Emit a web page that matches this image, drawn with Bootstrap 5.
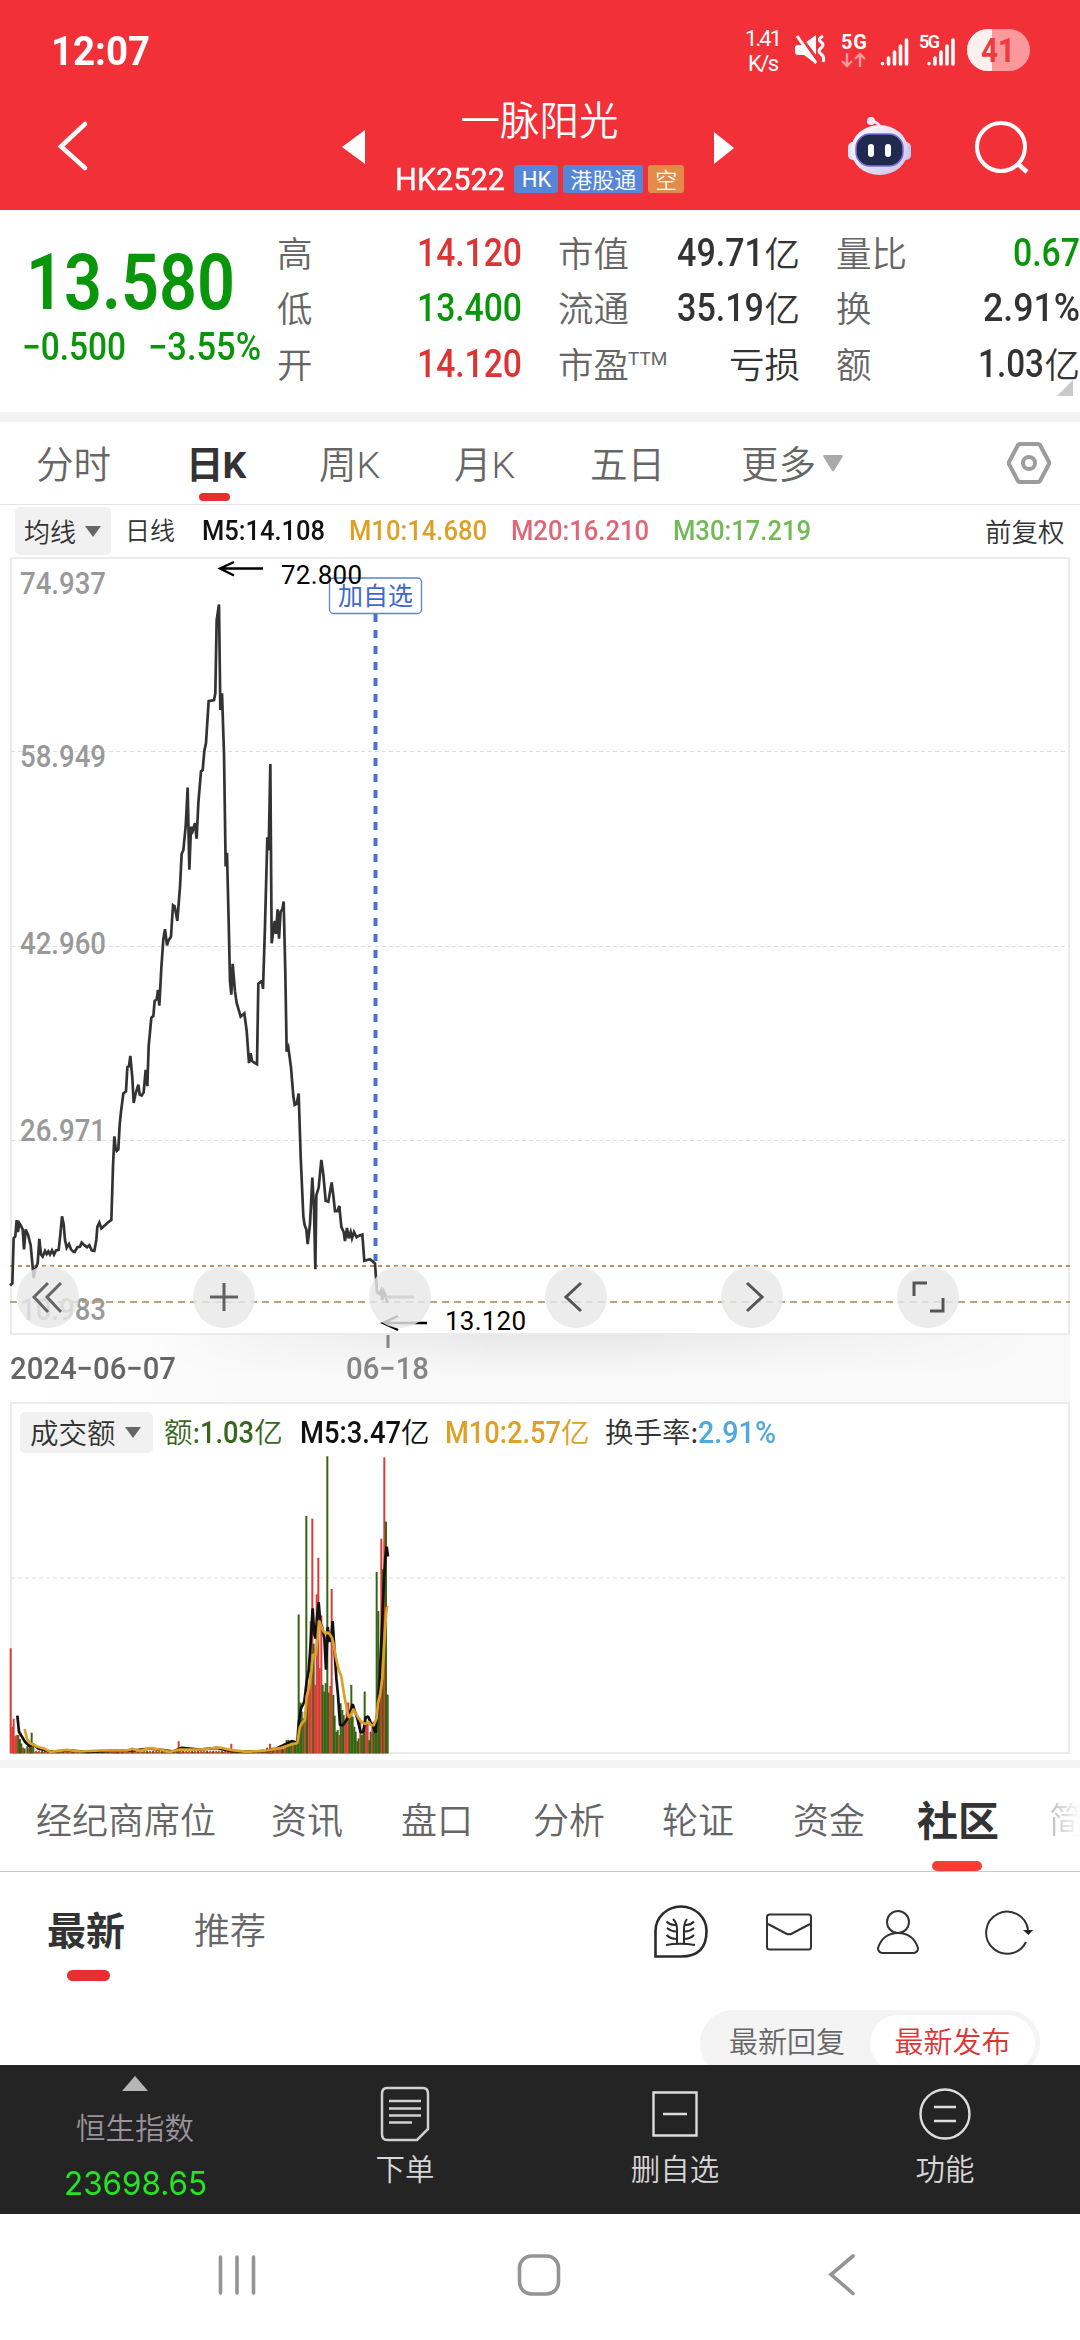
<!DOCTYPE html>
<html lang="zh-CN">
<head>
<meta charset="utf-8">
<meta name="viewport" content="width=device-width, initial-scale=1">
<title>一脉阳光 HK2522</title>
<link href="https://cdn.jsdelivr.net/npm/bootstrap@5.3.0/dist/css/bootstrap.min.css" rel="stylesheet">
<style>
body{width:1080px;height:2340px;overflow:hidden;background:#fff;color:#333;font-family:Roboto,"Noto Sans CJK SC",sans-serif;line-height:1}
svg{display:block;overflow:visible}
svg text{font-family:Roboto,"Noto Sans CJK SC",sans-serif}
.fit{display:inline-block;white-space:nowrap;font-weight:500}
.fit>span{display:inline-block;transform-origin:0 50%}
.cjk{font-family:"Noto Sans CJK SC",sans-serif;font-weight:350;white-space:nowrap}
.up{color:#de3333}.down{color:#0a960a}
.app-head{height:210px;background:#f23038;color:#fff}
.status-row{height:102px;padding-left:51px;font-size:41px}
.status-row .fit{font-weight:700}
.title-row{height:108px;display:grid;grid-template-columns:342px 23px 349px 20px 114px 63px 66px 1fr;align-items:start}
.stock-name{font-size:39.5px;line-height:40px;margin-top:-4px}
.stock-code{font-size:32px;height:28px;margin-top:27px;gap:5px}
.stock-code .fit{font-weight:400;-webkit-text-stroke:.4px #fff}
.tag{height:28px;border-radius:3px;background:#5586d8;font-size:22px;line-height:26px;padding:0 6.5px 0 7.5px}
.tag-hk{line-height:29px}
.tag-short{background:#e28c4a}
.quote{height:202px;display:grid;grid-template-columns:277px 281px 278px 244px}
.price{font-size:77px;line-height:77px;margin:35px 0 0 26px}
.price .fit{font-weight:600}
.chg{font-size:38px;margin-top:6px;padding-left:22px;gap:22px}
.qcol{padding-top:15.5px;font-size:39px}
.qcol>div{height:55.5px;display:flex;align-items:center;justify-content:space-between}
.qcol .cjk{font-size:35.5px;color:#666;position:relative;top:-2px}
.qcol .val{color:#333;display:flex;align-items:center}
.qcol .val .cjk{color:#333}
.ttm{font-size:19px;color:#666;align-self:flex-start;margin:12px auto 0 -1px}
.band{background:#f3f3f3}
.ktabs{height:83px;border-bottom:1px solid #e3e3e3;padding:0 0 0 36px;display:grid;grid-template-columns:150px 133px 135px 136px 151px 82px 184px 1fr;align-items:center;font-size:37.5px;color:#666}
.ktabs .cjk{font-family:Roboto,"Noto Sans CJK SC",sans-serif;margin-top:6px}
.ktabs .on{letter-spacing:-1px}
.on{color:#333!important;font-weight:700!important}
.with-bar{position:relative}
.with-bar::after{content:"";position:absolute;border-radius:6px;background:#e63030}
.k-on::after{left:13px;top:46px;width:31px;height:8px}
.ma-row{height:52px;display:grid;grid-template-columns:112px 75px 147px 162px 162px 312px 1fr;align-items:center;padding-left:15px;font-size:28px}
.pick{background:#f1f1f1;border-radius:5px;display:flex;align-items:center;justify-content:space-between}
.ma-row .pick{width:96px;height:48px;padding:0 10px 0 9px;font-size:26px}
.kchart{height:778px;position:relative}
.tools{position:absolute;left:17px;top:709px;width:942px;height:62px;display:flex;justify-content:space-between}
.tool-btn{width:62px;height:62px;border-radius:50%;background:rgba(232,232,232,.82)}
.axis-row{height:67px;position:relative;background:linear-gradient(90deg,#fff 30px,#f9f9f9 260px);margin-right:10px;font-size:31px;color:#666;padding-left:10px}
.axis-row::before{content:"";position:absolute;inset:0;background:linear-gradient(rgba(0,0,0,.065),transparent 62%);-webkit-mask-image:linear-gradient(90deg,transparent 150px,#000 500px,#000 600px,transparent 1040px);mask-image:linear-gradient(90deg,transparent 150px,#000 500px,#000 600px,transparent 1040px)}
.vol{height:358px;position:relative}
.vol-head{position:absolute;left:20px;top:10px;height:41px;width:1040px;display:grid;grid-template-columns:144px 136px 145px 160px 1fr;align-items:center;font-size:31px}
.vol-head .pick{width:133px;height:41px;padding:0 12px 0 10px}
.vol-head .cjk{font-size:28.5px;position:relative;top:-1px}
.vol-head .pick.cjk{top:0}
.vol-head>div{white-space:nowrap;display:flex;align-items:center}
.ntabs{height:104px;border-bottom:1px solid #c8c8c8;padding:0 0 3px 36px;display:grid;grid-template-columns:235px 130px 132px 129px 131px 124px 132px 1fr;align-items:center;font-size:36px;color:#666}
.ntabs .on{font-size:41px}
.n-on::after{left:15px;bottom:-23px;width:50px;height:10px;background:#fb3c31}
.fade-tab{background:linear-gradient(90deg,#bbb,#fff 32px);-webkit-background-clip:text;background-clip:text;color:transparent;width:31px;overflow:hidden}
.feed-head{height:120px;padding-left:47px;display:grid;grid-template-columns:147px 460px 112px 111px 108px 1fr;align-items:center;color:#666;font-size:36px}
.feed-head>span{margin-top:-8px}
.feed-head .on{font-size:39px}
.f-on::after{left:20px;top:61px;width:43px;height:11px}
.feed-body{height:73px;overflow:hidden;padding:18px 40px 0 700px}
.switcher{height:66px;border-radius:33px;background:#f4f4f4;font-size:29px;padding:5px 5px 5px 29px;color:#666}
.switcher>span:first-child{margin-bottom:5px}
.switcher .picked{background:#fff;border-radius:28px;height:56px;width:165px;color:#dd3434;padding-bottom:5px}
.dock{height:149px;background:#242424;color:#d6d6d6;font-size:29.5px;display:grid;grid-template-columns:repeat(4,1fr)}
.dock>div{display:flex;flex-direction:column;align-items:center}
.idx{color:#99939a}
.idx-val{color:#25e425;font-size:33px}
.idx-val .fit{font-family:Inter,sans-serif;font-weight:400}
</style>
<script src="https://cdn.jsdelivr.net/npm/bootstrap@5.3.0/dist/js/bootstrap.bundle.min.js"></script>
</head>
<body>
<header class="app-head">
  <div class="status-row d-flex align-items-center">
    <span class="fit" data-w="99">12:07</span>
    <svg class="ms-auto me-5" width="290" height="44" viewBox="742 30 290 44" fill="#fff">
      <g font-size="22"><text x="745" y="47" textLength="37">1.41</text><text x="748" y="72" textLength="31">K/s</text></g>
      <path d="M795 49q0-3 3-3h4l14-10v29l-12-9h-6q-3 0-3-3z"/><path d="M799 36l20 27" stroke="#f23038" stroke-width="3.600"/><path d="M797 37l19 27" stroke="#fff" stroke-width="3"/>
      <path d="M823 37q-6 3-2 6t0 6t0 6t2 8" fill="none" stroke="#fff" stroke-width="3"/>
      <text x="841" y="50" font-size="20" font-weight="700" textLength="26">5G</text>
      <g fill="none" stroke="#fa9a9d" stroke-width="2.400"><path d="M847 54v13M842 62l5 5 5-5M860 68V55M855 60l5-5 5 5"/></g>
      <g stroke="#fff" stroke-width="3.600" stroke-linecap="round"><path d="M882.500 64.500v.1M888.500 65V59M894.500 65V53M900.500 65V47M906.500 65V41M929 64.500v.1M935 65V59M941 65V53M947 65V47M953 65V41"/></g>
      <text x="919" y="49" font-size="18" font-weight="600" textLength="21">5G</text>
      <rect x="967" y="30" width="63" height="42" rx="21" fill="#fa999c"/><path d="M992 30h-4a21 21 0 0 0 0 42h4z" fill="#fff0f0"/>
      <text x="981" y="63" font-size="33" font-weight="700" fill="#ef3b40" textLength="34" lengthAdjust="spacingAndGlyphs">41</text>
    </svg>
  </div>
  <div class="title-row">
    <svg width="100" height="108" viewBox="0 102 100 108"><path d="M85 124L61 146.500 85 168" fill="none" stroke="#fff" stroke-width="4.500" stroke-linecap="round"/></svg>
    <svg width="23" height="108" viewBox="342 102 23 108"><path d="M365 130v34l-23-17z" fill="#fff"/></svg>
    <div class="text-center">
      <div class="stock-name cjk">一脉阳光</div>
      <div class="stock-code d-flex align-items-center justify-content-center">
        <span class="fit me-1" data-w="110">HK2522</span><span class="tag tag-hk">HK</span><span class="tag cjk">港股通</span><span class="tag tag-short cjk">空</span>
      </div>
    </div>
    <svg width="20" height="108" viewBox="714 102 20 108"><path d="M714 132v32l20-16z" fill="#fff"/></svg>
    <span></span>
    <svg width="63" height="108" viewBox="848 102 63 108">
      <defs><linearGradient id="shell" x2="1" y2="1"><stop stop-color="#fff"/><stop offset="1" stop-color="#c9c3ee"/></linearGradient></defs>
      <path d="M880 128q-1-6-9-7" fill="none" stroke="#e9e4fb" stroke-width="3"/><circle cx="871" cy="121" r="4" fill="#f6ecff"/>
      <rect x="848" y="142" width="12" height="18" rx="5" fill="#e3e2f8"/><rect x="899" y="142" width="12" height="18" rx="5" fill="#cfc6ef"/>
      <ellipse cx="879.500" cy="150" rx="28.500" ry="25" fill="url(#shell)"/>
      <rect x="856" y="134" width="47" height="32" rx="14" fill="#1f2a4e" stroke="#7b6cd8" stroke-width="1.500"/>
      <rect x="868" y="144" width="6" height="13" rx="3" fill="#fff"/><rect x="885" y="144" width="6" height="13" rx="3" fill="#fff"/>
    </svg>
    <span></span>
    <svg width="60" height="108" viewBox="977 102 60 108"><circle cx="1001" cy="147" r="24" fill="none" stroke="#fff" stroke-width="4"/><path d="M1017 163l10 9" stroke="#fff" stroke-width="4.500"/></svg>
  </div>
</header>

<section class="quote">
  <div>
    <div class="price down"><span class="fit" data-w="209">13.580</span></div>
    <div class="chg down d-flex"><span class="fit" data-w="104">−0.500</span><span class="fit" data-w="113">−3.55%</span></div>
  </div>
  <div class="qcol" style="padding-right:36px">
    <div><span class="cjk">高</span><span class="fit up" data-w="105">14.120</span></div>
    <div><span class="cjk">低</span><span class="fit down" data-w="105">13.400</span></div>
    <div><span class="cjk">开</span><span class="fit up" data-w="105">14.120</span></div>
  </div>
  <div class="qcol" style="padding-right:36px">
    <div><span class="cjk">市值</span><span class="val"><span class="fit" data-w="87">49.71</span><span class="cjk">亿</span></span></div>
    <div><span class="cjk">流通</span><span class="val"><span class="fit" data-w="87">35.19</span><span class="cjk">亿</span></span></div>
    <div><span class="cjk">市盈</span><span class="ttm">TTM</span><span class="val"><span class="cjk">亏损</span></span></div>
  </div>
  <div class="qcol position-relative">
    <div><span class="cjk">量比</span><span class="fit down" data-w="67">0.67</span></div>
    <div><span class="cjk">换</span><span class="val"><span class="fit" data-w="97">2.91%</span></span></div>
    <div><span class="cjk">额</span><span class="val"><span class="fit" data-w="66">1.03</span><span class="cjk">亿</span></span></div>
    <svg class="position-absolute bottom-0 end-0" width="23" height="32"><path d="M0 16H16V0z" fill="#c9c9c9"/></svg>
  </div>
</section>
<div class="band" style="height:10px"></div>

<nav class="ktabs">
  <span class="cjk">分时</span><span class="cjk on with-bar k-on">日K</span><span class="cjk">周K</span><span class="cjk">月K</span><span class="cjk">五日</span><span class="cjk">更多</span>
  <svg width="20" height="17"><path d="M2 0h16q2.500 0 1.500 2l-8 13q-1.500 2.500-3 0L.5 2Q-.5 0 2 0z" fill="#aaa"/></svg>
  <svg width="44" height="42" viewBox="0 0 44 42" fill="none" stroke="#9c9c9c" stroke-width="4"><path d="M13 2h18q1 0 2 1l9 17q.5 1 0 2l-9 17q-1 1-2 1H13q-1 0-2-1L2 22q-.5-1 0-2l9-17q1-1 2-1z"/><circle cx="22" cy="21" r="6"/></svg>
</nav>
<div class="ma-row">
  <div class="pick cjk">均线<svg width="16" height="11"><path d="M0 0h16L8 11z" fill="#666"/></svg></div>
  <span class="cjk" style="font-size:25px;margin:-3px 0 0 -2px">日线</span>
  <span class="fit" data-w="123" style="color:#111">M5:14.108</span><span class="fit" data-w="138" style="color:#dda127">M10:14.680</span><span class="fit" data-w="138" style="color:#df6677">M20:16.210</span><span class="fit" data-w="138" style="color:#72ba55">M30:17.219</span>
  <span class="cjk" style="font-size:26.500px">前复权</span>
</div>

<section class="kchart">
  <svg width="1080" height="778" viewBox="0 557 1080 778">
    <path d="M11 1335V558H1069V1335M11 1334H1069" fill="none" stroke="#ebebeb" stroke-width="2"/>
    <path d="M11 751.500H1069M11 946.500H1069M11 1140.500H1069" stroke="#dedede" stroke-dasharray="4 3"/>
    <g font-size="31" font-weight="500" fill="#999">
      <text x="20" y="594" textLength="86" lengthAdjust="spacingAndGlyphs">74.937</text><text x="20" y="767" textLength="86" lengthAdjust="spacingAndGlyphs">58.949</text><text x="20" y="954" textLength="86" lengthAdjust="spacingAndGlyphs">42.960</text><text x="20" y="1141" textLength="86" lengthAdjust="spacingAndGlyphs">26.971</text><text x="20" y="1320" textLength="86" lengthAdjust="spacingAndGlyphs">10.983</text>
    </g>
    <path d="M10 1266H1070" stroke="#bb8e57" stroke-width="2" stroke-dasharray="4 4"/>
    <path d="M10 1302H1070" stroke="#baa47c" stroke-width="2" stroke-dasharray="7 5"/>
    <path d="M375.500 614V1261" stroke="#4a70d4" stroke-width="4" stroke-dasharray="8 8"/>
    <g transform="translate(0 560) scale(.33333 .523)">
      <polyline fill="none" stroke="#333" stroke-width="2.700" vector-effect="non-scaling-stroke" points="30,1387 37,1383 41,1297 46,1293 50,1262 54,1285 58,1268 62,1272 68,1280 72,1318 77,1280 84,1290 92,1310 97,1345 101,1373 106,1355 113,1345 118,1298 123,1328 128,1332 135,1321 140,1327 145,1322 150,1328 156,1320 162,1328 168,1320 176,1319 181,1290 186,1255 191,1270 195,1300 200,1315 207,1308 213,1318 219,1322 224,1323 232,1314 240,1313 245,1305 253,1310 261,1314 268,1310 275,1320 283,1321 289,1300 292,1275 298,1267 304,1278 315,1272 325,1266 334,1262 339,1160 343,1102 347,1125 350,1130 355,1127 359,1080 363,1055 370,1020 378,1016 382,970 387,968 391,948 397,990 401,1038 407,1020 415,1003 419,1022 425,1024 431,1018 437,975 442,1006 446,930 454,875 460,872 464,843 470,840 474,822 478,852 484,780 490,725 495,706 501,737 505,728 513,720 519,660 524,662 532,690 540,625 545,562 550,555 557,510 563,435 568,592 573,510 578,518 585,503 590,533 595,465 603,404 608,402 613,365 618,350 626,270 642,268 646,255 650,115 657,85 661,287 666,255 672,370 677,586 681,560 686,690 690,805 694,831 698,772 705,825 710,847 717,862 722,873 733,867 740,900 747,962 752,943 756,958 765,962 771,964 775,810 786,805 789,820 795,700 802,530 806,555 811,390 815,733 824,690 828,715 833,668 837,724 842,672 847,668 851,653 856,790 860,940 865,932 873,970 880,1025 884,1042 890,1040 896,1020 902,1140 910,1255 914,1272 919,1280 923,1308 930,1270 937,1181 942,1240 946,1356 949,1215 956,1200 964,1147 970,1175 977,1225 985,1227 995,1190 1000,1215 1005,1245 1012,1245 1018,1235 1024,1275 1031,1285 1035,1302 1041,1277 1046,1297 1052,1285 1056,1297 1062,1285 1070,1295 1077,1292 1087,1290 1093,1340 1110,1337 1125,1345 1131,1400 1138,1403 1143,1397 1147,1415 1151,1398 1155,1403 1162,1420"/>
    </g>
    <rect x="329.500" y="578" width="92" height="35.500" rx="4" fill="#fff" stroke="#5a82d8" stroke-width="1.300"/>
    <text x="338" y="605" font-size="25" fill="#4168cf" textLength="75">加自选</text>
    <g font-size="26" fill="#000"><text x="281" y="584" textLength="81">72.800</text><text x="445" y="1330" textLength="81">13.120</text></g>
    <path d="M234 562L220 568.500l14 7M220 568.500h43M398 1316l-15 7 15 7M383 1323h44" fill="none" stroke="#000" stroke-width="2.400"/>
  </svg>
  <div class="tools">
    <svg class="tool-btn" viewBox="0 0 62 62" fill="none" stroke="#666" stroke-width="3"><path d="M31 17L17 31l14 15M44 17L30 31l14 15"/></svg>
    <svg class="tool-btn" viewBox="0 0 62 62" stroke="#606060" stroke-width="3"><path d="M17 31H45M31 17V45"/></svg>
    <svg class="tool-btn" viewBox="0 0 62 62" stroke="#d3d3d3" stroke-width="3"><path d="M17 31H45"/></svg>
    <svg class="tool-btn" viewBox="0 0 62 62" fill="none" stroke="#555" stroke-width="3"><path d="M36 17L21 31l15 14"/></svg>
    <svg class="tool-btn" viewBox="0 0 62 62" fill="none" stroke="#555" stroke-width="3"><path d="M26 17L41 31 26 45"/></svg>
    <svg class="tool-btn" viewBox="0 0 62 62" fill="none" stroke="#555" stroke-width="3"><path d="M17 30V17H30M33 45H46V32"/></svg>
  </div>
</section>
<div class="axis-row d-flex align-items-center">
  <span class="fit" data-w="166">2024−06−07</span><span class="fit" data-w="83" style="color:#858585;margin-left:170px">06−18</span>
  <svg class="position-absolute top-0 start-0" width="400" height="14"><path d="M388 0V13" stroke="#858585" stroke-width="3"/></svg>
</div>

<section class="vol">
  <svg width="1080" height="352" viewBox="0 0 1080 352">
    <path d="M11 351V1H1069V351H11" fill="none" stroke="#ebebeb" stroke-width="2"/>
    <path d="M11 176H1069" stroke="#e8e8e8" stroke-width="1.500" stroke-dasharray="4 3"/>
    <g transform="translate(0 -2) scale(.33333 .3351)">
      <g id="bars"></g>
      <g fill="none" stroke-width="2.700" stroke-linejoin="bevel">
        <polyline stroke="#111" vector-effect="non-scaling-stroke" points="52,942 57,990 66,1005 75,1020 88,1033 100,1028 115,1040 150,1049 210,1046 260,1050 330,1047 400,1046 450,1040 490,1045 520,1049 545,1038 600,1043 650,1038 690,1047 740,1050 800,1047 830,1040 875,1018 892,1022 896,965 903,920 913,900 920,840 926,808 931,740 938,622 943,700 947,712 951,650 956,603 961,665 967,680 973,710 978,805 983,678 989,722 994,705 998,660 1003,740 1009,830 1014,880 1020,970 1029,970 1040,955 1049,935 1058,908 1065,930 1072,950 1082,992 1090,990 1097,948 1104,944 1112,962 1120,975 1127,993 1133,920 1139,830 1145,700 1151,560 1156,470 1160,438 1164,467"/>
        <polyline stroke="#dda127" vector-effect="non-scaling-stroke" points="74,982 81,1012 92,1025 110,1034 135,1041 150,1050 200,1044 240,1049 300,1046 380,1046 397,1041 420,1047 450,1039 480,1043 510,1050 540,1043 600,1043 660,1037 690,1044 740,1050 800,1046 840,1039 880,1026 892,1024 899,978 907,963 915,955 920,885 928,855 934,810 939,760 947,762 953,710 957,658 964,675 970,690 977,697 983,694 990,700 996,710 1001,730 1008,770 1016,805 1024,825 1030,865 1036,900 1041,925 1047,948 1053,940 1060,922 1067,935 1076,950 1086,962 1096,967 1105,960 1113,970 1121,971 1130,950 1134,905 1141,875 1147,830 1152,740 1158,640 1161,618 1165,620"/>
      </g>
    </g>
  </svg>
  <div class="vol-head">
    <div class="pick cjk">成交额<svg width="16" height="11"><path d="M0 0h16L8 11z" fill="#666"/></svg></div>
    <div style="color:#38661c"><span class="cjk">额:</span><span class="fit" data-w="54">1.03</span><span class="cjk">亿</span></div>
    <div style="color:#111"><span class="fit" data-w="101">M5:3.47</span><span class="cjk">亿</span></div>
    <div style="color:#dda127"><span class="fit" data-w="116">M10:2.57</span><span class="cjk">亿</span></div>
    <div><span class="cjk">换手率:</span><span class="fit" data-w="78" style="color:#50a8dd">2.91%</span></div>
  </div>
</section>
<div class="band" style="height:8px"></div>

<nav class="ntabs cjk">
  <span>经纪商席位</span><span>资讯</span><span>盘口</span><span>分析</span><span>轮证</span><span>资金</span><span><span class="on with-bar n-on">社区</span></span><span class="fade-tab">简</span>
</nav>
<div class="feed-head cjk">
  <span class="on with-bar f-on">最新</span><span>推荐</span>
  <svg width="54" height="54" viewBox="0 0 54 54" fill="none" stroke="#2b2b2b" stroke-width="2.600"><path d="M1.500 51.500V26a25.500 24.500 0 0 1 51 0q0 25.500-25.500 25.500z"/><path stroke-width="2" d="M12 40q14-2.500 29 0M23 38V24q0-6-4-10M12.500 16.500q4 4 9 3.500M13 23q5 4 10 3.500M12.500 30q4 4 10.500 4M30 38V24q0-6 3-10M40 16.500q-4 4-9 3.500M40 23q-5 4-10 3.500M40 30q-4 4-10 4"/></svg>
  <svg width="46" height="38" viewBox="0 0 46 38" fill="none" stroke="#333" stroke-width="2"><rect x="1" y="1.500" width="44" height="35" rx="2.500"/><path d="M2 11l18 9.500q3 1.500 6 0l18-9.500"/></svg>
  <svg width="42" height="44" viewBox="0 0 42 44" fill="none" stroke="#333" stroke-width="2"><circle cx="21" cy="12" r="11"/><path d="M5 43q-4-1-4-5 5-15 20-15t20 15q0 4-4 5z"/></svg>
  <svg width="48" height="44" viewBox="0 0 48 44" fill="none" stroke="#333" stroke-width="2"><path d="M41 32A21 21 0 1 1 43 20"/><path d="M38 20h10l-4.500 5z" fill="#222" stroke="none"/></svg>
</div>
<div class="feed-body">
  <div class="switcher cjk d-flex align-items-center justify-content-between"><span>最新回复</span><span class="picked d-flex align-items-center justify-content-center">最新发布</span></div>
</div>

<footer class="dock cjk">
  <div><svg width="26" height="15" style="margin-top:11px"><path d="M13 0l13 15H0z" fill="#b5b5b5"/></svg><span class="idx" style="margin-top:21px">恒生指数</span><span class="idx-val" style="margin-top:23px"><span class="fit" data-w="143">23698.65</span></span></div>
  <div><svg width="50" height="56" viewBox="0 0 50 56" style="margin-top:21px" fill="none" stroke="#d0d0d0" stroke-width="2.500"><path d="M7 2H43q5 0 5 6V43L37 54H7q-5 0-5-6V8q0-6 5-6z"/><path d="M9 15H41M9 22.500H41M9 29.500H41M9 36.500H32"/></svg><span style="margin-top:11px">下单</span></div>
  <div><svg width="46" height="46" viewBox="0 0 46 46" style="margin-top:26px" fill="none" stroke="#ddd" stroke-width="2.400"><path d="M1.500 1.500H44.500V44.500H1.500zM11 23H35"/></svg><span style="margin-top:16px">删自选</span></div>
  <div><svg width="52" height="52" viewBox="0 0 52 52" style="margin-top:23px" fill="none" stroke="#ddd" stroke-width="2.400"><circle cx="26" cy="26" r="24.500"/><path d="M15 19H37M15 33H37"/></svg><span style="margin-top:13px">功能</span></div>
</footer>
<svg width="1080" height="126" viewBox="0 2214 1080 126" fill="none" stroke="#949494" stroke-width="3.600" stroke-linecap="round"><path d="M220.500 2257V2293M237 2257V2293M253.500 2257V2293M853 2256L831 2274.500 853 2293.500"/><rect x="519.500" y="2256" width="39" height="38" rx="12"/></svg>

<script>
// squeeze figures to the narrow numeric width given in data-w
document.querySelectorAll('.fit').forEach(function (el) {
  var inner = document.createElement('span');
  inner.textContent = el.textContent;
  el.textContent = '';
  el.appendChild(inner);
  var w = +el.dataset.w, natural = inner.getBoundingClientRect().width;
  inner.style.transform = 'scaleX(' + (w / natural) + ')';
  el.style.width = w + 'px';
  inner.style.marginRight = (w - natural) + 'px';
});
// turnover bars: x, top, colour (r = up, g = down)
var bars = [[32,741,'r'],[37,975,'r'],[41,951,'r'],[46,1003,'r'],[50,1000,'r'],[55,1000,'g'],[60,1012,'g'],[64,1025,'g'],[69,1037,'r'],[74,1040,'g'],[82,1033,'g'],[87,1037,'r'],[91,1027,'g'],[95,993,'g'],[100,1030,'g'],
 [345,1042,'r'],[352,1047,'r'],[365,1043,'r'],[536,1018,'r'],[541,1036,'r'],[694,1026,'r'],[810,1026,'r'],[815,1038,'g'],
 [860,1015,'g'],[865,1014,'g'],[869,1018,'g'],[874,1022,'g'],[878,1019,'r'],[883,1022,'g'],[887,1023,'g'],[892,1010,'g'],[896,640,'g'],[901,903,'g'],[905,930,'g'],[910,950,'g'],[914,930,'r'],[919,346,'g'],[923,880,'g'],[928,850,'r'],[932,660,'r'],[937,354,'r'],[941,727,'g'],[946,850,'r'],[950,580,'r'],[955,471,'r'],[959,800,'r'],[964,643,'r'],[968,850,'g'],[973,870,'g'],[977,845,'g'],[982,168,'g'],[986,873,'g'],[991,853,'r'],[995,564,'r'],[1000,880,'g'],[1004,942,'g'],[1009,990,'g'],[1013,985,'g'],[1018,1000,'r'],[1022,905,'g'],[1027,925,'g'],[1031,940,'g'],[1036,950,'r'],[1040,903,'r'],[1045,903,'r'],[1049,930,'g'],[1054,850,'g'],[1058,945,'g'],[1063,975,'g'],[1067,990,'g'],[1072,1018,'g'],[1076,1010,'g'],[1081,960,'r'],[1085,1000,'g'],[1090,980,'g'],[1094,870,'g'],[1099,960,'r'],[1103,965,'r'],[1108,1015,'g'],[1112,990,'g'],[1117,975,'r'],[1121,960,'g'],[1126,960,'g'],[1130,513,'g'],[1135,630,'g'],[1140,860,'g'],[1144,414,'r'],[1149,505,'g'],[1153,171,'r'],[1158,363,'g'],[1163,879,'g']];
for (var x = 104; x < 860; x += 4.5) bars.push([x, 1043 + (x * 7 % 9) - (x > 800 ? 9 : 0), (x * 13 | 0) % 5 < 3 ? 'r' : 'g']);
document.getElementById('bars').innerHTML = bars.map(function (b) {
  return '<rect x="' + (b[0] - 3) + '" y="' + b[1] + '" width="6" height="' + (1055 - b[1]) + '" fill="' + (b[2] === 'r' ? '#dd3b35' : '#356512') + '"/>';
}).join('');
</script>
</body>
</html>
